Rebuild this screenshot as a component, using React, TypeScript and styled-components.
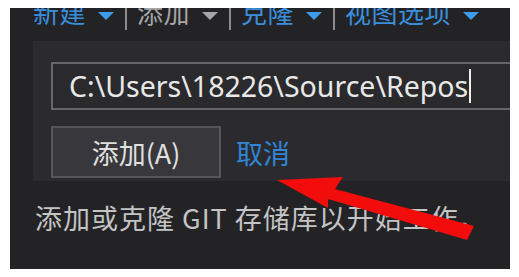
import React from "react";
import styled, { createGlobalStyle } from "styled-components";

const Global = createGlobalStyle`
  html, body { margin: 0; padding: 0; background: #ffffff; }
  body { font-family: "Noto Sans CJK SC", "Noto Sans", sans-serif; }
`;

const Frame = styled.div`
  position: relative;
  margin: 8px 9px 8px 10px;
  width: 500px;
  height: 261px;
  background: #232326;
  overflow: hidden;
  display: flex;
  flex-direction: column;
`;

const Toolbar = styled.div`
  display: flex;
  align-items: center;
  height: 32px;
  margin-top: -12px;
  padding-left: 23px;
  font-size: 26px;
  line-height: 32px;
  letter-spacing: 0.5px;
`;

const Menu = styled.span<{ $disabled?: boolean }>`
  display: flex;
  align-items: center;
  color: ${(p) => (p.$disabled ? "#a6a6a6" : "#3a8fdc")};
  gap: 12px;
`;

const Caret = styled.span<{ $disabled?: boolean }>`
  width: 0;
  height: 0;
  border-left: 8px solid transparent;
  border-right: 8px solid transparent;
  border-top: 8px solid ${(p) => (p.$disabled ? "#a6a6a6" : "#3d9be9")};
  margin-top: 8px;
`;

const Sep = styled.span`
  width: 2px;
  height: 26px;
  background: #8c8c8c;
  margin: 10px 10px 0 11px;
`;

const Panel = styled.div`
  margin-top: 13px;
  margin-left: 23px;
  background: #2b2b2f;
  padding: 21px 0 3px 18px;
  display: flex;
  flex-direction: column;
  gap: 16px;
  overflow: hidden;
`;

const PathInput = styled.div`
  box-sizing: border-box;
  width: 480px;
  height: 48px;
  border: 2px solid #67676b;
  border-right: none;
  background: #2a2a2d;
  color: #e8e8e8;
  font-family: "Noto Sans", sans-serif;
  font-size: 28.5px;
  line-height: 44px;
  padding-left: 16px;
  display: flex;
  align-items: center;
  white-space: nowrap;
`;

const Cursor = styled.span`
  width: 2px;
  height: 34px;
  background: #f0f0f0;
  margin-left: 1px;
`;

const Actions = styled.div`
  display: flex;
  align-items: center;
  gap: 15px;
`;

const AddButton = styled.div`
  box-sizing: border-box;
  width: 170px;
  height: 52px;
  border: 2px solid #55555a;
  background: #38383c;
  color: #e0e0e0;
  font-size: 27px;
  display: flex;
  align-items: center;
  justify-content: center;
`;

const CancelLink = styled.span`
  color: #2f86d6;
  font-size: 27px;
`;

const Hint = styled.div`
  margin-top: 20px;
  padding-left: 25px;
  color: #c4c4c4;
  font-size: 27px;
  line-height: 34px;
  letter-spacing: 1px;
  white-space: nowrap;
`;

const ArrowLayer = styled.svg`
  position: absolute;
  left: 0;
  top: 0;
  width: 500px;
  height: 261px;
  pointer-events: none;
`;

export default function App() {
  return (
    <>
      <Global />
      <Frame>
        <Toolbar>
          <Menu>
            新建 <Caret />
          </Menu>
          <Sep />
          <Menu $disabled>
            添加 <Caret $disabled />
          </Menu>
          <Sep />
          <Menu>
            克隆 <Caret />
          </Menu>
          <Sep />
          <Menu>
            视图选项 <Caret />
          </Menu>
        </Toolbar>
        <Panel>
          <PathInput>
            C:\Users\18226\Source\Repos
            <Cursor />
          </PathInput>
          <Actions>
            <AddButton>添加(A)</AddButton>
            <CancelLink>取消</CancelLink>
          </Actions>
        </Panel>
        <Hint>添加或克隆 GIT 存储库以开始工作。</Hint>
        <ArrowLayer viewBox="0 0 500 261">
          <polygon
            points="267,172 333,169 325,181 464,218 457,232 318,191 318,200"
            fill="#f20c0c"
          />
        </ArrowLayer>
      </Frame>
    </>
  );
}
